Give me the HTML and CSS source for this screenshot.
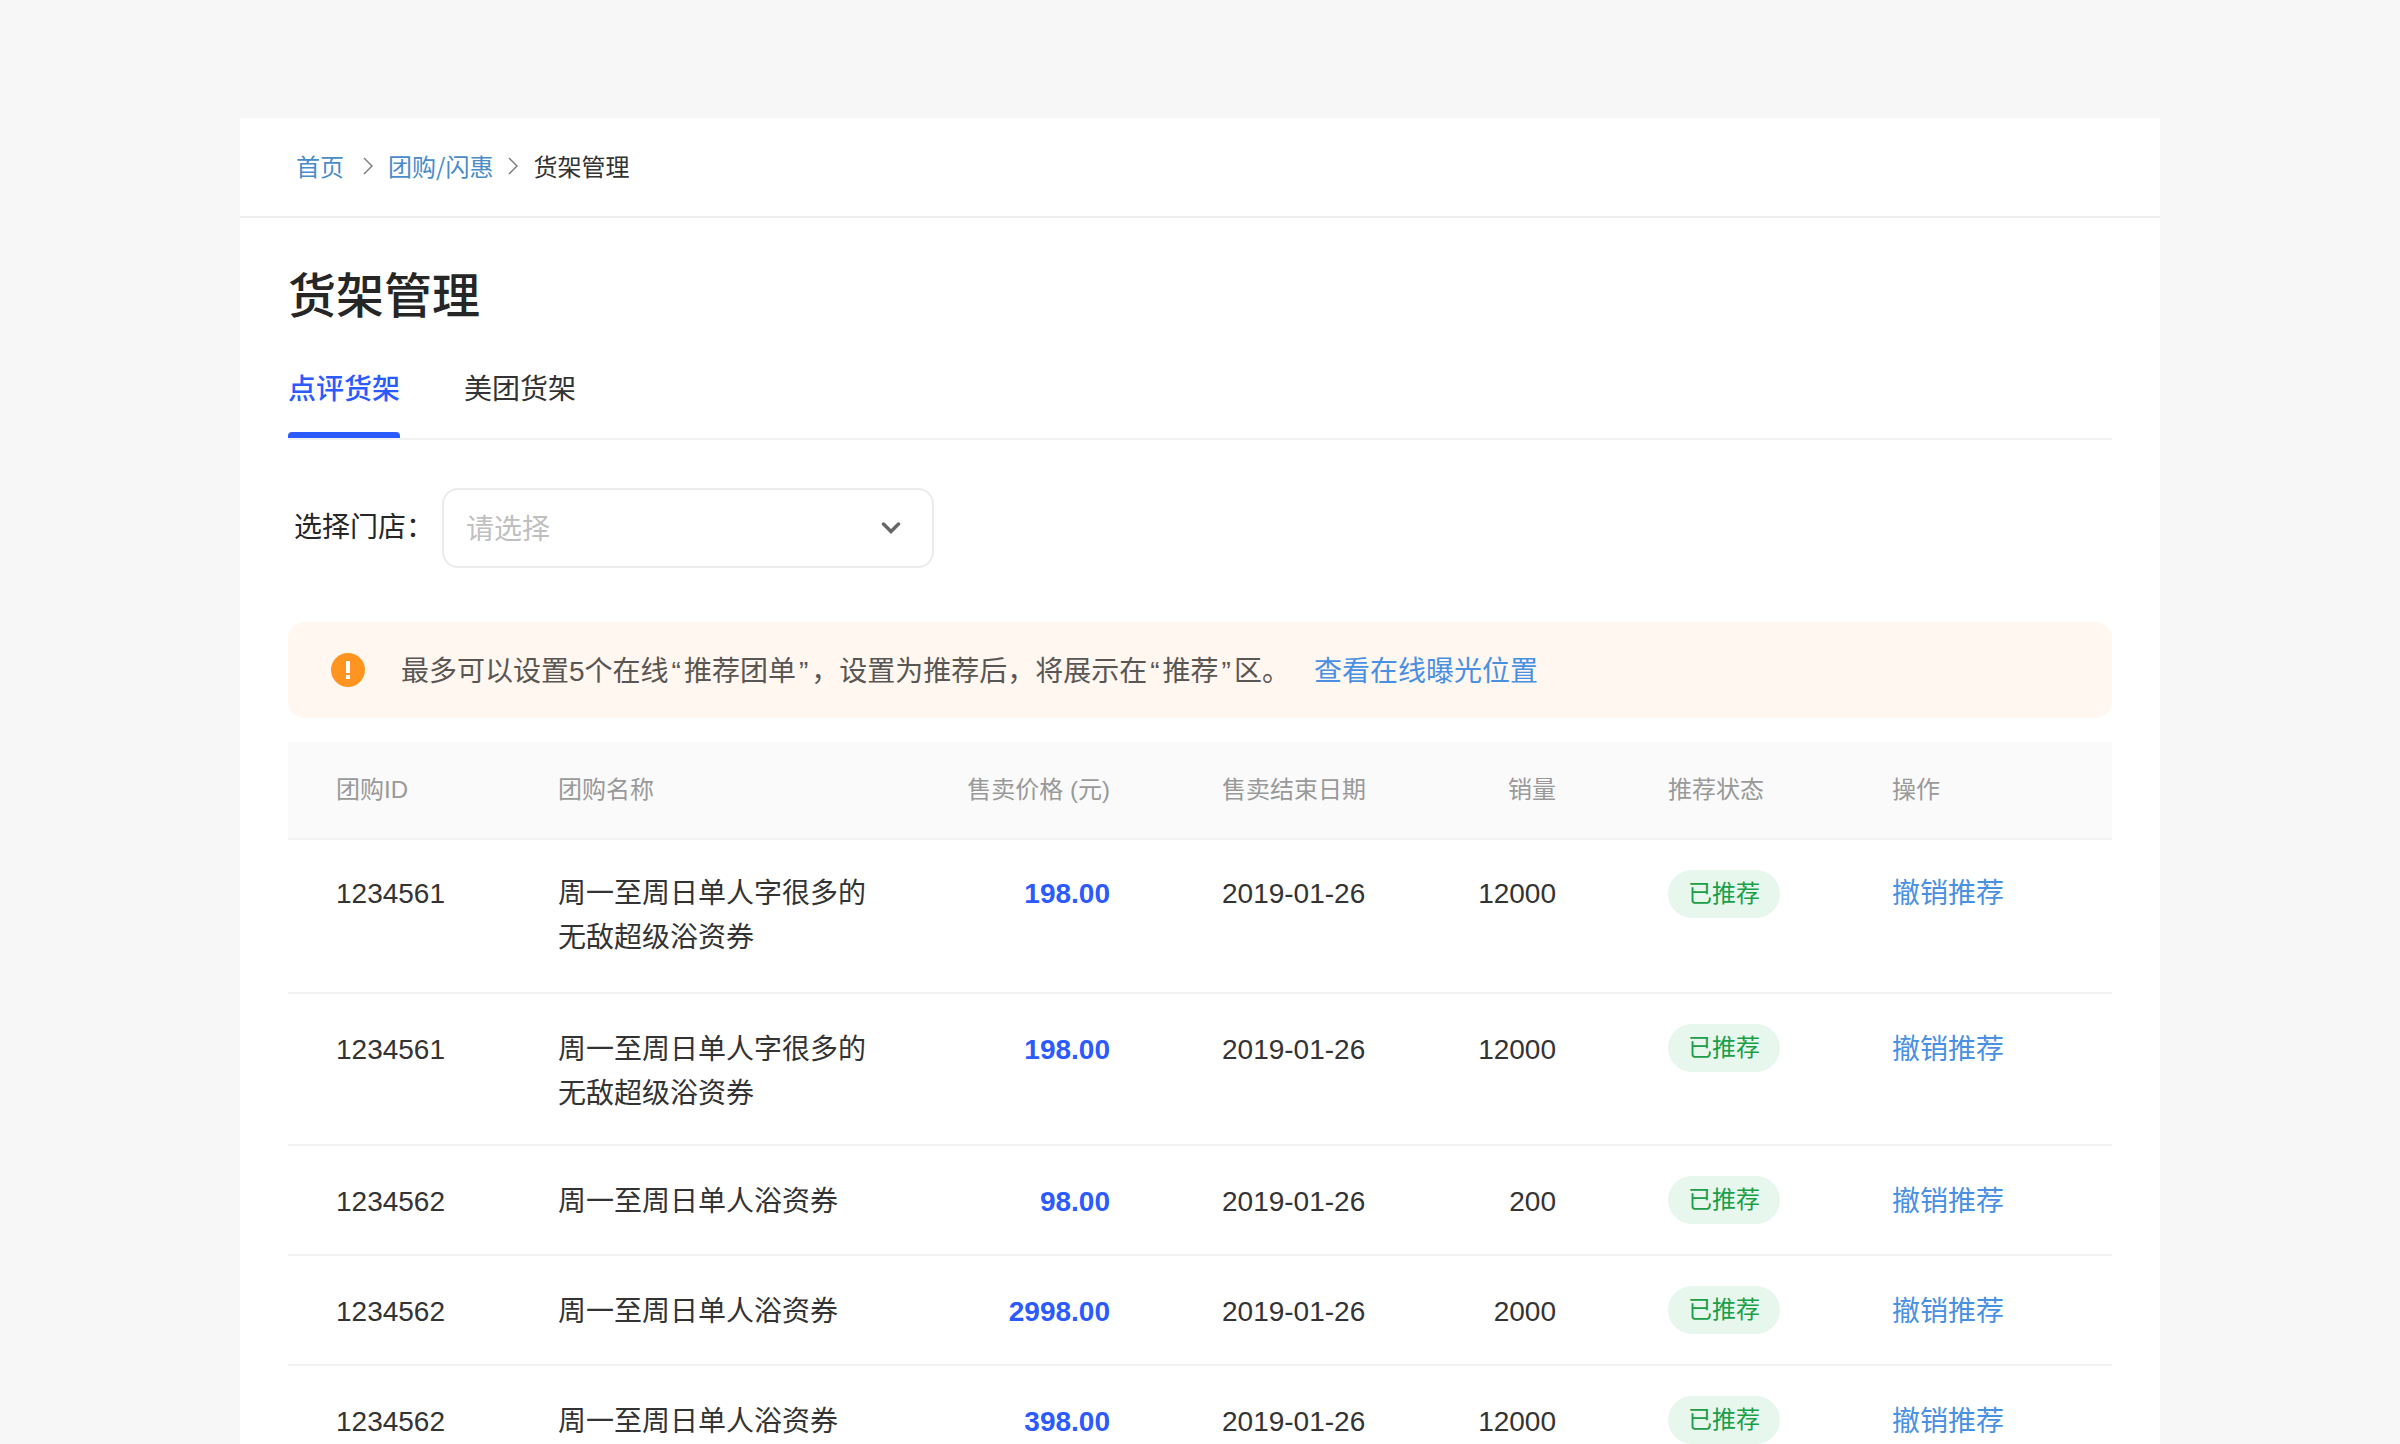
FILE: index.html
```html
<!DOCTYPE html>
<html lang="zh-CN">
<head>
<meta charset="utf-8">
<meta name="viewport" content="width=device-width, initial-scale=1">
<title>货架管理</title>
<link rel="stylesheet" href="styles.css">
</head>
<body>
<div class="page">
  <nav class="breadcrumb" aria-label="面包屑">
    <a class="crumb crumb-home" href="#">首页</a>
    <svg class="crumb-sep" viewBox="0 0 10 18" aria-hidden="true"><path d="M1 1l8 8-8 8"/></svg>
    <a class="crumb" href="#">团购/闪惠</a>
    <svg class="crumb-sep" viewBox="0 0 10 18" aria-hidden="true"><path d="M1 1l8 8-8 8"/></svg>
    <span class="crumb-current">货架管理</span>
  </nav>

  <main class="content">
    <h1 class="title">货架管理</h1>

    <div class="tabs" role="tablist">
      <button class="tab tab-active" type="button" role="tab" aria-selected="true">点评货架</button>
      <button class="tab" type="button" role="tab" aria-selected="false">美团货架</button>
    </div>

    <div class="filter">
      <label class="filter-label" for="shop">选择门店：</label>
      <div class="select-box">
        <select class="select" id="shop">
          <option value="">请选择</option>
        </select>
        <svg class="select-arrow" viewBox="0 0 20 12" aria-hidden="true"><path d="M2.500 2l7.500 7.500 7.500-7.500"/></svg>
      </div>
    </div>

    <div class="notice" role="note">
      <svg class="notice-icon" viewBox="0 0 34 34" aria-hidden="true">
        <circle cx="17" cy="17" r="17"/>
        <path d="M15 8h4v12h-4zM15 22h4v4h-4z"/>
      </svg>
      <p class="notice-text">最多可以设置5个在线<span class="quote">“</span>推荐团单<span class="quote">”</span>，设置为推荐后，将展示在<span class="quote">“</span>推荐<span class="quote">”</span>区。</p>
      <a class="link notice-link" href="#">查看在线曝光位置</a>
    </div>

    <table class="deals">
      <colgroup>
        <col class="col-id"><col class="col-name"><col class="col-price"><col class="col-date"><col class="col-sales"><col class="col-status"><col class="col-action">
      </colgroup>
      <thead>
        <tr>
          <th class="id" scope="col">团购ID</th>
          <th scope="col">团购名称</th>
          <th class="num" scope="col">售卖价格 (元)</th>
          <th class="date" scope="col">售卖结束日期</th>
          <th class="num" scope="col">销量</th>
          <th class="status" scope="col">推荐状态</th>
          <th scope="col">操作</th>
        </tr>
      </thead>
      <tbody>
        <tr>
          <td class="id">1234561</td>
          <td>周一至周日单人字很多的无敌超级浴资券</td>
          <td class="num price">198.00</td>
          <td class="date">2019-01-26</td>
          <td class="num">12000</td>
          <td class="status"><span class="badge">已推荐</span></td>
          <td><a class="link" href="#">撤销推荐</a></td>
        </tr>
        <tr>
          <td class="id">1234561</td>
          <td>周一至周日单人字很多的无敌超级浴资券</td>
          <td class="num price">198.00</td>
          <td class="date">2019-01-26</td>
          <td class="num">12000</td>
          <td class="status"><span class="badge">已推荐</span></td>
          <td><a class="link" href="#">撤销推荐</a></td>
        </tr>
        <tr>
          <td class="id">1234562</td>
          <td>周一至周日单人浴资券</td>
          <td class="num price">98.00</td>
          <td class="date">2019-01-26</td>
          <td class="num">200</td>
          <td class="status"><span class="badge">已推荐</span></td>
          <td><a class="link" href="#">撤销推荐</a></td>
        </tr>
        <tr>
          <td class="id">1234562</td>
          <td>周一至周日单人浴资券</td>
          <td class="num price">2998.00</td>
          <td class="date">2019-01-26</td>
          <td class="num">2000</td>
          <td class="status"><span class="badge">已推荐</span></td>
          <td><a class="link" href="#">撤销推荐</a></td>
        </tr>
        <tr>
          <td class="id">1234562</td>
          <td>周一至周日单人浴资券</td>
          <td class="num price">398.00</td>
          <td class="date">2019-01-26</td>
          <td class="num">12000</td>
          <td class="status"><span class="badge">已推荐</span></td>
          <td><a class="link" href="#">撤销推荐</a></td>
        </tr>
      </tbody>
    </table>
  </main>
</div>
</body>
</html>
```
FILE: styles.css
```css
* {
  box-sizing: border-box;
}

html {
  scrollbar-width: none;
}

body {
  margin: 0;
  padding: 118px 10% 0;
  background: #f7f7f7;
  color: #333;
  font: 28px/44px "Liberation Sans", "Noto Sans CJK SC", sans-serif;
}

.page {
  background: #fff;
}

.breadcrumb {
  display: flex;
  align-items: center;
  gap: 15px;
  padding: 26px 56px 28px;
  border-bottom: 2px solid #eee;
  font-family: "Noto Sans CJK SC", sans-serif;
  font-size: 24px;
}

.crumb {
  color: #4a8bc9;
  text-decoration: none;
}

.crumb-home {
  padding-right: 4px;
}

.crumb-sep {
  width: 10px;
  height: 18px;
  fill: none;
  stroke: #777;
  stroke-width: 1.4;
}

.content {
  padding: 45px 48px 0;
}

.title {
  margin: 0;
  color: #262626;
  font-size: 48px;
  font-weight: 500;
  line-height: 68px;
}

.tabs {
  display: flex;
  gap: 64px;
  margin-top: 37px;
  border-bottom: 2px solid #f2f2f2;
}

.tab {
  padding: 0 0 20px;
  border: 0;
  border-bottom: 6px solid transparent;
  background: none;
  color: #333;
  font: inherit;
}

.tab-active {
  position: relative;
  color: #2b5aff;
  font-weight: 500;
}

.tab-active::after {
  content: "";
  position: absolute;
  right: 0;
  bottom: -6px;
  left: 0;
  height: 6px;
  border-radius: 4px 4px 0 0;
  background: #2b5aff;
}

.filter {
  display: flex;
  align-items: center;
  gap: 8px;
  margin-top: 48px;
  padding-left: 6px;
}

.filter-label {
  color: #262626;
}

.select-box {
  display: grid;
  align-items: center;
  width: 492px;
}

.select {
  grid-area: 1 / 1;
  height: 80px;
  padding: 4px 22px 0;
  border: 2px solid #ebebeb;
  border-radius: 16px;
  appearance: none;
  background: #fff;
  color: #bfbfbf;
  font: inherit;
}

.select-arrow {
  grid-area: 1 / 1;
  justify-self: end;
  width: 20px;
  height: 12px;
  margin-right: 33px;
  fill: none;
  stroke: #666;
  stroke-width: 3.5;
  stroke-linecap: round;
  pointer-events: none;
}

.notice {
  display: flex;
  align-items: center;
  margin-top: 54px;
  padding: 24px 43px;
  border-radius: 16px;
  background: #fff7f0;
}

.notice-icon {
  width: 34px;
  height: 34px;
  margin-right: 36px;
  fill: #fff;
}

.notice-icon circle {
  fill: #ff9420;
}

.notice-text,
.notice-link {
  padding-top: 4px;
}

.notice-text {
  margin: 0;
  color: #595653;
}

.notice-link {
  margin-left: 24px;
}

.quote {
  padding: 0 3px;
}

.link {
  color: #4a90e2;
  text-decoration: none;
}

.deals {
  width: 100%;
  margin-top: 24px;
  border-collapse: separate;
  border-spacing: 0;
  table-layout: fixed;
}

.col-id { width: 270px; }
.col-name { width: 330px; }
.col-price { width: 222px; }
.col-date { width: 282px; }
.col-sales { width: 164px; }
.col-status { width: 336px; }
.col-action { width: 220px; }

.deals th,
.deals td {
  border-bottom: 2px solid #f2f2f2;
  text-align: left;
  vertical-align: top;
}

.deals th {
  padding: 26px 0;
  background: #fafafa;
  color: #999;
  font-size: 24px;
  font-weight: 400;
}

.deals td {
  padding: 34px 0 28px;
}

.deals tbody tr:first-child td {
  padding: 32px 0;
}

.deals tr .id,
.deals tbody tr:first-child .id {
  padding-left: 48px;
}

.deals tr .date,
.deals tr .status,
.deals tbody tr:first-child .date,
.deals tbody tr:first-child .status {
  padding-left: 112px;
}

.deals td.status,
.deals tbody tr:first-child .status {
  padding-top: 30px;
  padding-bottom: 30px;
}

.deals .num {
  text-align: right;
}

.deals .price {
  color: #2b5aff;
  font-weight: 700;
}

.deals .link {
  display: block;
}

.badge {
  display: block;
  width: 112px;
  border-radius: 24px;
  background: #e8f7ed;
  color: #1a9e48;
  font-size: 24px;
  line-height: 48px;
  text-align: center;
}
```
